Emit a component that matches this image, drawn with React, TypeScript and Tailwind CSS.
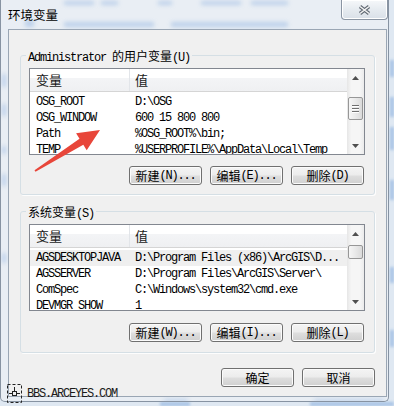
import React from "react";

const mono = "font-['Liberation_Mono','Noto_Sans_CJK_SC',monospace]";
const cjk = "font-['Noto_Sans_CJK_SC','Liberation_Sans',sans-serif]";

// splits a label into CJK runs (12px) and latin runs (6px-wide mono, like SimSun)
function Mixed({ text }: { text: string }) {
  const parts = text.split(/([\u4e00-\u9fff]+)/).filter(Boolean);
  return (
    <>
      {parts.map((p, i) =>
        /[\u4e00-\u9fff]/.test(p) ? (
          <span key={i} className={`${cjk} text-[12px] tracking-normal`}>
            {p}
          </span>
        ) : (
          <span key={i} className={`${mono} text-[12px] tracking-[-1.2px]`}>
            {p}
          </span>
        )
      )}
    </>
  );
}

function WinButton({ label }: { label: string }) {
  return (
    <button className="w-[73px] h-[19px] rounded-[3px] border border-[#707070] bg-[linear-gradient(#f4f4f4,#ececec_48%,#dedede_52%,#d0d0d0)] shadow-[inset_0_0_0_1px_#fbfbfb] flex items-center justify-center text-black leading-[16px] whitespace-nowrap">
      <Mixed text={label} />
    </button>
  );
}

function Arrow({ down }: { down?: boolean }) {
  return (
    <div className="h-[17px] flex items-center justify-center">
      <svg width="7" height="4" viewBox="0 0 7 4">
        <path d={down ? "M0 0L7 0L3.5 4Z" : "M0 4L3.5 0L7 4Z"} fill="#505050" />
      </svg>
    </div>
  );
}

function ScrollBar({ thumb, grip }: { thumb: string; grip?: boolean }) {
  return (
    <div className="w-[17px] h-full flex flex-col bg-[linear-gradient(90deg,#e6e6e6,#f6f6f6_25%,#f6f6f6_75%,#ebebeb)]">
      <Arrow />
      <div className="flex-1 px-[1px]">
        <div
          className={`${thumb} rounded-[2px] border border-[#979797] bg-[linear-gradient(90deg,#f6f6f6,#e9e9e9_50%,#dadada)] flex flex-col items-center justify-center gap-[2px]`}
        >
          {grip &&
            [0, 1, 2].map((g) => (
              <div key={g} className="w-[7px] h-[1px] bg-[#6f6f6f] shadow-[0_1px_0_#ffffff]" />
            ))}
        </div>
      </div>
      <Arrow down />
    </div>
  );
}

function VarList({
  rows,
  thumb,
  grip,
  selected,
}: {
  rows: [string, string][];
  thumb: string;
  grip?: boolean;
  selected?: number;
}) {
  return (
    <div className="h-[87px] border border-[#828790] bg-white flex overflow-hidden">
      <div className="flex-1 min-w-0 flex flex-col">
        <div className="h-[23px] shrink-0 flex border-b border-[#d5d5d5] bg-[linear-gradient(#ffffff_0%,#ffffff_42%,#f3f4f6_43%,#eff0f2_100%)] text-[13px] text-[#1a1a1a]">
          <div className={`${cjk} w-[100px] pl-[6px] border-r border-[#e2e5e9] flex items-center`}>变量</div>
          <div className={`${cjk} flex-1 pl-[5px] flex items-center`}>值</div>
        </div>
        <div className="pt-[2px]">
          {rows.map(([name, value], i) => (
            <div
              key={name}
              className={`h-[16px] flex leading-[16px] text-black ${mono} text-[12px] tracking-[-1.2px] whitespace-nowrap ${
                i === selected ? "bg-[#efefef]" : ""
              }`}
            >
              <div className="w-[100px] pl-[6px] overflow-hidden">{name}</div>
              <div className="flex-1 pl-[5px] overflow-hidden">{value}</div>
            </div>
          ))}
        </div>
      </div>
      <ScrollBar thumb={thumb} grip={grip} />
    </div>
  );
}

function Group({ title, children, className }: { title: string; children: React.ReactNode; className: string }) {
  return (
    <fieldset className={`mx-[11px] border border-[#d5dfe5] rounded-[3px] shadow-[1px_1px_0_#fdfdfd] pl-[8px] pr-[9px] pt-[5px] ${className}`}>
      <legend className="ml-[-3px] px-[2px] h-[16px] leading-[16px] text-black whitespace-nowrap">
        <Mixed text={title} />
      </legend>
      {children}
    </fieldset>
  );
}

const userVars: [string, string][] = [
  ["OSG_ROOT", "D:\\OSG"],
  ["OSG_WINDOW", "600 15 800 800"],
  ["Path", "%OSG_ROOT%\\bin;"],
  ["TEMP", "%USERPROFILE%\\AppData\\Local\\Temp"],
];

const sysVars: [string, string][] = [
  ["AGSDESKTOPJAVA", "D:\\Program Files (x86)\\ArcGIS\\D..."],
  ["AGSSERVER", "D:\\Program Files\\ArcGIS\\Server\\"],
  ["ComSpec", "C:\\Windows\\system32\\cmd.exe"],
  ["DEVMGR_SHOW", "1"],
];

// blurred shapes seen through the glass frame
const glass: { l: number; t: number; w: number; h: number }[] = [
  { l: 63, t: 1, w: 30, h: 4 },
  { l: 100, t: 1, w: 17, h: 4 },
  { l: 157, t: 1, w: 14, h: 4 },
  { l: 200, t: 1, w: 40, h: 4 },
  { l: 250, t: 1, w: 37, h: 4 },
  { l: 63, t: 22, w: 90, h: 5 },
  { l: 170, t: 22, w: 117, h: 5 },
  { l: 24, t: 20, w: 9, h: 7 },
  { l: 1, t: 74, w: 4, h: 13 },
  { l: 1, t: 104, w: 4, h: 12 },
  { l: 1, t: 146, w: 4, h: 8 },
  { l: 1, t: 174, w: 4, h: 12 },
  { l: 1, t: 253, w: 4, h: 10 },
  { l: 163, t: 399, w: 24, h: 3 },
  { l: 313, t: 399, w: 70, h: 3 },
];

const desk: { l: number; t: number; w: number; h: number }[] = [
  { l: 390, t: 60, w: 4, h: 17 },
  { l: 390, t: 97, w: 4, h: 20 },
  { l: 390, t: 127, w: 4, h: 23 },
  { l: 390, t: 180, w: 4, h: 20 },
  { l: 390, t: 267, w: 4, h: 16 },
  { l: 390, t: 330, w: 4, h: 17 },
  { l: 160, t: 402, w: 30, h: 4 },
  { l: 310, t: 402, w: 84, h: 4 },
];

export default function App() {
  return (
    <div className="relative w-[394px] h-[406px] overflow-hidden bg-[#dfe8f2]">
      {desk.map((b, i) => (
        <div
          key={i}
          className="absolute bg-[#8fb3e0] blur-[1.5px] opacity-70"
          style={{ left: b.l, top: b.t, width: b.w, height: b.h }}
        />
      ))}

      {/* window */}
      <div className="relative w-[389px] h-[402px] border-l border-r border-b border-[#8793a2] rounded-b-[5px] bg-[#e9eef4] flex flex-col overflow-hidden">
        {glass.map((b, i) => (
          <div
            key={i}
            className="absolute bg-[#a9c4e6] blur-[2px] opacity-70"
            style={{ left: b.l, top: b.t, width: b.w, height: b.h }}
          />
        ))}

        {/* title bar */}
        <div className="relative h-[29px] shrink-0 flex items-start justify-between pl-[7px]">
          <div className={`${cjk} text-[12.5px] leading-[16px] text-black mt-[7px]`}>环境变量</div>
          <div className="w-[47px] h-[20px] rounded-b-[4px] border border-t-0 border-[#8a95a3] bg-[linear-gradient(#f6f8fa,#e6ebf0_50%,#d9e0e8)] shadow-[inset_0_0_0_1px_#ffffff] flex items-center justify-center">
            <svg width="13" height="10" viewBox="0 0 13 10">
              <path d="M2 1.5L11 8.5M11 1.5L2 8.5" stroke="#626b75" strokeWidth="3.6" />
              <path d="M2 1.5L11 8.5M11 1.5L2 8.5" stroke="#f4f4f4" strokeWidth="1.5" />
            </svg>
          </div>
        </div>

        {/* client area */}
        <div className="relative ml-[7px] mr-[1px] h-[368px] shrink-0 border border-[#9aa6b4] bg-[#f0f0f0] flex flex-col">
          <Group title="Administrator 的用户变量(U)" className="mt-[17px] pb-[9px]">
            <VarList rows={userVars} thumb="mt-[11px] h-[23px]" grip />
            <div className="mt-[11px] flex justify-end gap-[8px] mr-[1px]">
              <WinButton label="新建(N)..." />
              <WinButton label="编辑(E)..." />
              <WinButton label="删除(D)" />
            </div>
          </Group>

          <Group title="系统变量(S)" className="mt-[8px] pb-[10px]">
            <VarList rows={sysVars} thumb="mt-[3px] h-[14px]" selected={0} />
            <div className="mt-[12px] flex justify-end gap-[8px] mr-[1px]">
              <WinButton label="新建(W)..." />
              <WinButton label="编辑(I)..." />
              <WinButton label="删除(L)" />
            </div>
          </Group>

          <div className="mt-[15px] mr-[11px] flex justify-end gap-[8px]">
            <WinButton label="确定" />
            <WinButton label="取消" />
          </div>
        </div>
      </div>

      {/* watermark */}
      <div className="absolute left-[7px] top-[384px] flex items-center gap-[5px]">
        <svg width="15" height="19" viewBox="0 0 15 19">
          <rect x="0.5" y="0.5" width="14" height="18" fill="none" stroke="#222" strokeDasharray="3 2" />
          <rect x="5.5" y="7.5" width="4" height="4" fill="none" stroke="#222" />
          <path d="M2 9.5H5.5M9.5 9.5H13M7.5 3V7.5" stroke="#222" />
        </svg>
        <span className={`${mono} text-[12px] tracking-[-1.2px] leading-[16px] text-[#1a1a1a]`}>BBS.ARCEYES.COM</span>
      </div>

      {/* red arrow */}
      <svg className="absolute left-0 top-0 pointer-events-none" width="394" height="406" viewBox="0 0 394 406">
        <polygon
          points="34.5,170.2 79.5,138.7 76.1,133.3 100,130 86.7,150.2 83.3,144.7 35.5,171.8"
          fill="#e8463a"
        />
      </svg>
    </div>
  );
}
